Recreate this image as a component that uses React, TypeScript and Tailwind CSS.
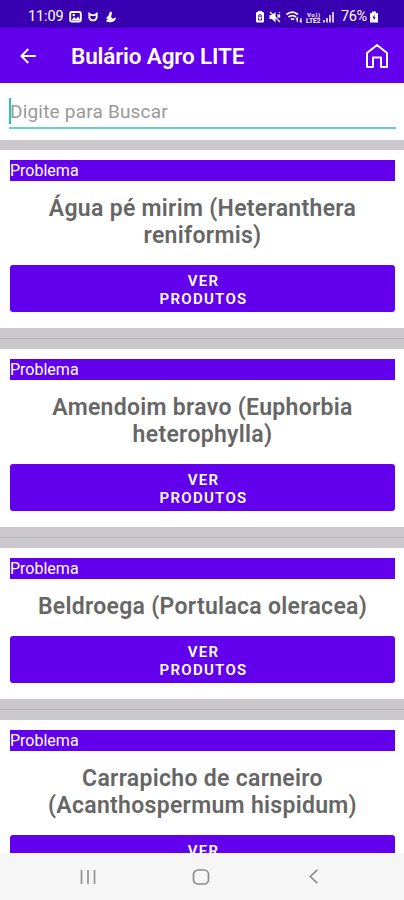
const problems: string[][] = [
  ['Água pé mirim (Heteranthera', 'reniformis)'],
  ['Amendoim bravo (Euphorbia', 'heterophylla)'],
  ['Beldroega (Portulaca oleracea)'],
  ['Carrapicho de carneiro', '(Acanthospermum hispidum)'],
];

function StatusBar() {
  return (
    <div className="flex h-[28px] shrink-0 items-center bg-[#3900b2] pt-[6px] text-white">
      <span className="ml-[28px] w-[41px] whitespace-nowrap text-[14.500px] leading-[20px] tracking-[-0.1px]">11:09</span>
      <svg className="h-[14px] w-[50px]" viewBox="0 0 50 14" fill="none" stroke="#fff">
        <rect x="1.2" y="2" width="10.6" height="9.6" rx="1.5" strokeWidth="1.9" />
        <path d="M2.500 10.500 5 7l2 2 2-2.500 2.500 4z" fill="#fff" stroke="none" />
        <circle cx="4.800" cy="5" r="1.300" fill="#fff" stroke="none" />
        <path d="M20.300 3.700v3.800a3.800 3.800 0 0 0 7.400 0V3.700l-2.200 1.500h-3z" strokeWidth="1.800" />
        <path d="M41 1.500c2 0 2.300 1.500 1.700 2.700L42 6.500l1.200 2.300 4-1.200c-.5 2.500-2.300 4.700-5.200 4.700-3 0-5-.8-5-1.600 0-.9 1.500-.8 2.300-1.200L37 8.300l2.700-3z" fill="#fff" stroke="none" />
      </svg>
      <svg className="ml-[135px] h-[14px] w-[85px]" viewBox="0 0 85 14" fill="none" stroke="#fff">
        <rect x="2" y="2" width="8" height="10.500" rx="1.200" fill="#fff" stroke="none" />
        <path d="M4 1.500h4" strokeWidth="1.200" />
        <path d="M6 4.200 4 6.200h4zM4.500 7.500V10h3V7.500" stroke="#3900b2" strokeWidth=".9" />
        <path d="M15.500 5H18l3.500-3v10.500L18 9h-2.500z" fill="#fff" stroke="none" />
        <path d="m16 2 10 10M23.500 4.500l2.500 3m0-3-2.500 3M25.500 2v1" strokeWidth="1.200" />
        <path d="M32.500 4.500c3.500-3 8-3 11.500 0M34.500 7c2-1.800 5.500-1.800 7.500 0M37 9.500c1-.8 2-.8 3 0" strokeWidth="1.700" />
        <path d="M43.300 12V8L42 9.300m5-1.300v4l-1.300-1.300" strokeWidth="1.200" />
        <text x="53" y="6.800" fontSize="6" fontWeight="700" textLength="13" fill="#fff" stroke="none">Vo))</text>
        <text x="52" y="12.800" fontSize="6.500" fontWeight="700" textLength="14.500" fill="#fff" stroke="none">LTE2</text>
        <path d="M70 12.500V10M73 12.500V8M76 12.500V5M79 12.500V2" strokeWidth="1.900" opacity=".8" />
      </svg>
      <span className="ml-[2px] w-[28px] whitespace-nowrap text-[14.500px] leading-[20px] tracking-[-0.4px]">76%</span>
      <svg className="h-[14px] w-[10px]" viewBox="0 0 10 14">
        <path d="M3 1.500h4V3h2v9.500H1V3h2z" fill="#fff" />
        <path d="M5.500 4.500 3.500 8h1.200v2.500L6.700 7.200H5.500z" fill="#3900b2" />
      </svg>
    </div>
  );
}

function ProblemCard({ lines }: { lines: string[] }) {
  return (
    <section className="shrink-0 border-b border-[#b8b4bc]">
      <div className="border-y-[10px] border-[#cac7cd] bg-white px-[10px] pt-[10px] pb-[16px]">
        <div className="h-[21px] w-[385px] bg-[#6200ee] text-[16px] leading-[22px] text-white">Problema</div>
        <h2 className="mt-[14px] ml-px text-center text-[23px] leading-[27px] font-semibold tracking-[0.300px] text-[#666]">
          {lines.map((line) => (
            <span key={line} className="block whitespace-nowrap">{line}</span>
          ))}
        </h2>
        <button className="mt-[16px] block h-[47px] w-[385px] rounded-[3px] bg-[#6200ee] pt-[3px] pl-[2px] text-center text-[15px] leading-[18px] font-semibold tracking-[1.300px] text-white">
          <span className="block">VER</span>
          <span className="block">PRODUTOS</span>
        </button>
      </div>
    </section>
  );
}

export default function App() {
  return (
    <div className="flex h-[900px] w-[404px] flex-col overflow-hidden bg-white font-['Roboto',sans-serif]">
      <StatusBar />
      <header className="flex h-[55px] shrink-0 items-center bg-[#6200ee] text-white">
        <svg className="ml-[20px] h-[16px] w-[17px]" viewBox="0 0 17 16" fill="none" stroke="#fff" strokeWidth="1.900">
          <path d="M16 8H1.500M8.300 1 1.300 8l7 7" />
        </svg>
        <h1 className="ml-[34px] flex-1 pt-[2px] text-[22.500px] font-semibold tracking-[-0.150px] whitespace-nowrap">Bulário Agro LITE</h1>
        <svg className="mr-[15px] h-[26px] w-[24px]" viewBox="0 0 24 26" fill="none" stroke="#fff" strokeWidth="2">
          <path d="M2 10 12 2l10 8v14h-6v-9.500H8V24H2z" strokeLinejoin="round" />
        </svg>
      </header>
      <div className="h-[57px] shrink-0 px-[9px] pt-[15px]">
        <div className="flex h-[31px] w-[387px] border-b-2 border-[#65d1c8]">
          <span className="h-[26px] w-[2px] bg-[#20c7b5]" />
          <span className="ml-[-1px] text-[19px] leading-[28px] tracking-[0.200px] text-[#999]">Digite para Buscar</span>
        </div>
      </div>
      <main className="flex min-h-0 flex-1 flex-col overflow-hidden">
        {problems.map((lines) => (
          <ProblemCard key={lines[0]} lines={lines} />
        ))}
      </main>
      <nav className="flex h-[47px] shrink-0 items-center bg-[#f6f6f6]">
        <svg className="ml-[80px] h-[14px] w-[16px]" viewBox="0 0 16 14" stroke="#8b8b8b" strokeWidth="1.600">
          <path d="M1.500 0v14M8 0v14M14.500 0v14" />
        </svg>
        <svg className="ml-[96px] h-[16px] w-[18px]" viewBox="0 0 18 16" fill="none" stroke="#8b8b8b" strokeWidth="1.700">
          <rect x="1.500" y="1" width="15" height="14" rx="4.500" />
        </svg>
        <svg className="ml-[99px] h-[15px] w-[9px]" viewBox="0 0 9 15" fill="none" stroke="#8b8b8b" strokeWidth="1.600">
          <path d="M8.300.8 1.300 7.500l7 6.700" />
        </svg>
      </nav>
    </div>
  );
}
